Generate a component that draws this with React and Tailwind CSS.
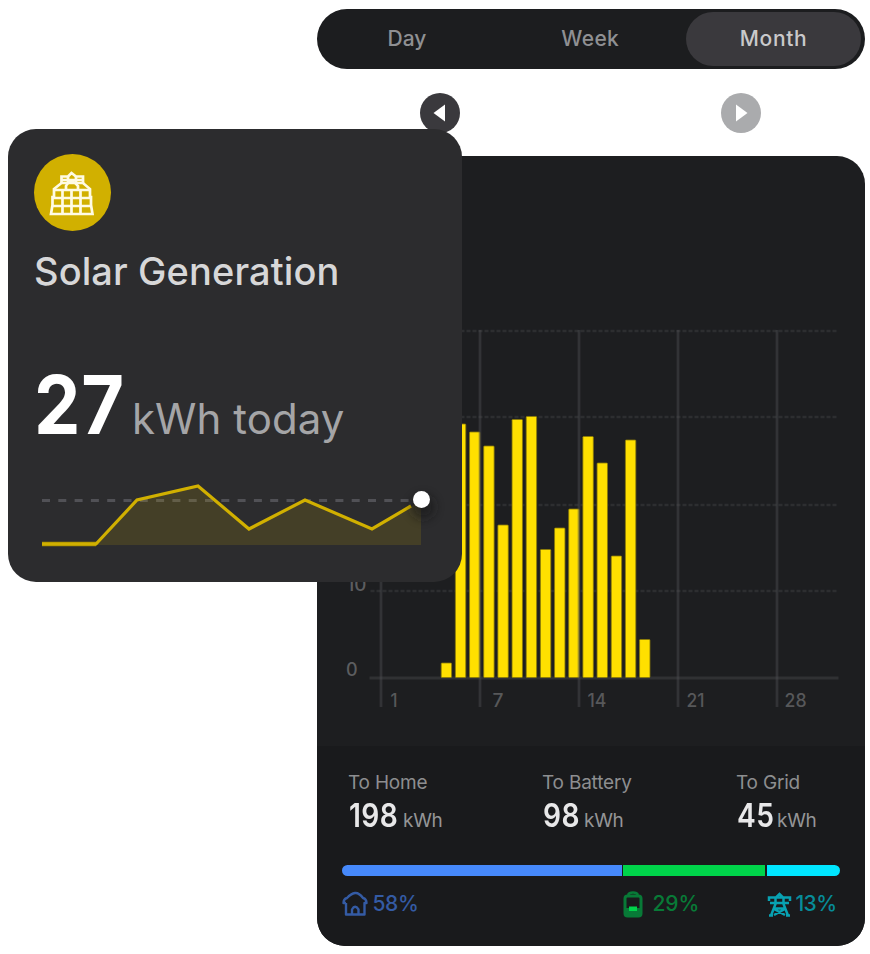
import React from "react";

const BARS = [663, 424, 432, 446, 525, 419.5, 416.5, 549.5, 528, 509, 436.5, 463, 556, 440, 639.5];
const DAYS = [
  [381, "1", 390, 7],
  [480, "7", 492, 11],
  [579, "14", 587, 19],
  [678, "21", 686, 18],
  [777, "28", 784, 22],
];

function MonthChart() {
  return (
    <svg className="block h-[590px] w-[549px]" viewBox="316.5 156 549 590" fontFamily="Inter, sans-serif">
      {[331, 417, 505, 591].map((y) => (
        <line key={y} x1="370" x2="838" y1={y} y2={y} stroke="#2d2e30" strokeWidth="2.5" strokeDasharray="4 2" />
      ))}
      <line x1="369" x2="838" y1="678" y2="678" stroke="#303133" strokeWidth="3" />
      {BARS.map((y, i) => (
        <rect key={i} x={440.7 + i * 14.17} y={y} width="10.4" height={677.5 - y} rx="0.8" fill="#ffe000" stroke="#8a7a08" strokeWidth="0.8" />
      ))}
      {DAYS.map(([x, label, tx, w]) => (
        <g key={label}>
          <line x1={x - 0.5} x2={x - 0.5} y1="330" y2="707" stroke="#505255" strokeOpacity="0.42" strokeWidth="2.8" />
          <text x={tx} y="706.5" fontSize="18" fontWeight="500" fill="#57585a" textLength={w} lengthAdjust="spacingAndGlyphs">{label}</text>
        </g>
      ))}
      <g fontSize="18" fontWeight="500" fill="#5c5d5f">
        <text x="346" y="591" textLength="20" lengthAdjust="spacingAndGlyphs">10</text>
        <text x="345.5" y="676">0</text>
      </g>
    </svg>
  );
}

function Stat({ label, value, valueClass, className }) {
  return (
    <div className={`shrink-0 ${className}`}>
      <div className="text-[19px] leading-[24px] tracking-[-0.2px] text-[#8d8e90]">{label}</div>
      <div className="mt-[3px] flex items-baseline leading-[36px]">
        <span className={`ml-[1px] origin-left scale-x-[0.88] text-[32px] font-semibold tracking-[0.5px] text-[#e8e8e9] ${valueClass}`}>{value}</span>
        <span className="text-[19px] tracking-[-0.3px] text-[#949597]">kWh</span>
      </div>
    </div>
  );
}

function Arrow({ flip, className }) {
  return (
    <div className={`flex size-10 items-center justify-center rounded-full ${className}`}>
      <svg className="h-[18px] w-[13px]" viewBox="0 0 13 18">
        <path d={flip ? "M12 0.500V17.500L0.500 9Z" : "M1 0.500V17.500L12.500 9Z"} fill="#fff" />
      </svg>
    </div>
  );
}

function SolarCard() {
  return (
    <div className="absolute left-2 top-[128.5px] flex h-[453px] w-[453.5px] flex-col rounded-[28px] bg-[#2c2c2e] pl-[25.5px] pt-[25.5px]">
      <div className="flex size-[77px] items-center justify-center rounded-full bg-[#d1b000]">
        <svg className="h-[46px] w-[46px]" viewBox="0 0 46 46" fill="none" stroke="#fffbe4" strokeWidth="2.7">
          <path d="M12.500 14V6.500H19L22.500 3L27 6.500H34V14" />
          <path d="M5 19L12.500 13H34L41 19V27H42V35L43.500 44H2L3.500 35V27H5Z" />
          <path d="M5 20H41M4 28H42M3 36H43M13.500 19V43M22.500 21V43M31.500 19V43M17 20V16Q19 12 22.500 12T29 16V20M19 6V12M27 6V12M13 10H33" />
        </svg>
      </div>
      <div className="ml-[0.5px] mt-[17px] text-[38px] font-medium leading-[46px] tracking-[0.1px] text-[#d7d7d8]">Solar Generation</div>
      <div className="ml-[0.5px] mt-[62.5px] flex items-baseline leading-[96px]">
        <span className="w-[98px] origin-left scale-x-[0.91] text-[81px] font-bold tracking-[1px] text-white">27</span>
        <span className="text-[42px] tracking-[0.05px] text-[#a5a5a7]">kWh today</span>
      </div>
      <svg className="ml-[0.5px] mt-[6.5px] h-[80px] w-[410px] shrink-0 overflow-visible" viewBox="34 473 410 80">
        <defs>
          <filter id="dotShadow" x="-100%" y="-100%" width="300%" height="300%">
            <feGaussianBlur stdDeviation="5" />
          </filter>
        </defs>
        <line x1="42" x2="412" y1="500.5" y2="500.5" stroke="#515156" strokeWidth="2.8" strokeDasharray="8 8.3" />
        <path d="M96 545L137 500L198 486L249 529L305 500L372 529L412 506L421 500V545Z" fill="#d1b000" fillOpacity="0.15" />
        <path d="M42 544H96" stroke="#a58d03" strokeWidth="4.5" />
        <path d="M42 544H96L137 500L198 486L249 529L305 500L372 529L411 506" fill="none" stroke="#d1b000" strokeWidth="3.2" />
        <circle cx="423" cy="507" r="12" fill="#151516" opacity="0.55" filter="url(#dotShadow)" />
        <circle cx="421.5" cy="499.5" r="8.5" fill="#fff" />
      </svg>
    </div>
  );
}

export default function App() {
  return (
    <div className="relative h-[954px] w-[870px] overflow-hidden bg-white font-['Inter',sans-serif]">
      <div className="ml-[316.5px] flex w-[548.5px] flex-col pt-[9px]">
        <div className="flex h-[60px] items-center justify-between rounded-[30px] bg-[#1c1d1f] pr-[4px] text-center text-[21px] font-medium text-[#8f9093]">
          <div className="w-[182px] pr-[1px] tracking-[0px]">Day</div>
          <div className="w-[184px] pr-[4px] tracking-[0.4px]">Week</div>
          <div className="flex h-[54px] w-[175px] items-center justify-center rounded-[27px] bg-[#3a393d] tracking-[0.6px] text-[#c9c9cb]">Month</div>
        </div>
        <div className="mt-[24px] flex h-10 justify-between pl-[103px] pr-[104px]">
          <Arrow flip className="bg-[#3a393d]" />
          <Arrow className="bg-[#aaabad]" />
        </div>
        <div className="mt-[23px] h-[790px] overflow-hidden rounded-[28px] bg-[#1d1e20]">
          <MonthChart />
          <div className="h-[200px] bg-[#191a1c] px-[25px] pt-[24.5px]">
            <div className="flex pl-[6.5px]">
              <Stat label="To Home" value="198" valueClass="w-[54px]" className="w-[194px]" />
              <Stat label="To Battery" value="98" valueClass="w-[41px]" className="w-[194px]" />
              <Stat label="To Grid" value="45" valueClass="w-[40px]" className="w-[100px]" />
            </div>
            <div className="mt-[26.5px] flex h-[10.5px] gap-[1.5px] overflow-hidden rounded-full">
              <div className="w-[280px] bg-[#4689fb]" />
              <div className="w-[142px] bg-[#00d44a]" />
              <div className="flex-1 bg-[#00e6ff]" />
            </div>
            <div className="mt-[14.5px] flex h-[28px] items-center text-[21px] font-medium">
              <div className="flex w-[280px] items-center gap-[5px] text-[#345ba4]">
                <svg className="size-[26px]" viewBox="0 0 26 26" fill="none" stroke="currentColor" strokeWidth="2.4" strokeLinejoin="round">
                  <path d="M4 12H1.500Q1.500 8 5 7Q9 2.500 13 2T21 7Q24.500 8 24.500 12H22.500V23.500H4V12M10 23V18.500Q13 13 16.500 18.500V23" />
                </svg>
                <span className="tracking-[-0.4px]">58%</span>
              </div>
              <div className="flex w-[145px] items-center gap-[9px] text-[#087a37]">
                <svg className="h-[27px] w-[22px]" viewBox="0 0 22 27" fill="none">
                  <path d="M6 4Q7 1.500 11 1.500T16 4" stroke="currentColor" strokeWidth="2.4" />
                  <rect x="3" y="5" width="16" height="20" rx="2.5" stroke="currentColor" strokeWidth="3" />
                  <path d="M4 17H18V24H4Z" fill="currentColor" />
                  <path d="M7 15.500H15V20H7Z" fill="#00d44a" />
                </svg>
                <span className="tracking-[-0.1px]">29%</span>
              </div>
              <div className="flex items-center gap-[4px] text-[#078b99]">
                <svg className="h-[25px] w-[25px]" viewBox="0 0 25 25" fill="none" stroke="#08a2b2" strokeWidth="2.5">
                  <path d="M8.500 6L12.500 2L16.500 6M8.500 5V12L4 23.500M16.500 5V12L21 23.500M2 9V5.500H23V9M3 11H22M7 16.500H18M7 17L18 23M18 17L7 23M2 23.500H6M19 23.500H23" />
                </svg>
                <span className="tracking-[-0.6px]">13%</span>
              </div>
            </div>
          </div>
        </div>
      </div>
      <SolarCard />
    </div>
  );
}
